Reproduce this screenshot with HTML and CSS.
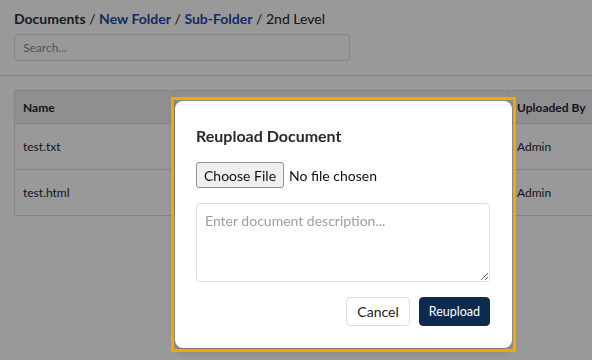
FILE: index.html
```html
<!DOCTYPE html>
<html lang="en">
<head>
    <meta charset="UTF-8">
    <meta name="viewport" content="width=device-width, initial-scale=1.0">
    <title>Documents</title>
    <link rel="stylesheet" href="styles.css">
</head>
<body>
    <div class="page">
        <div class="top">
            <div class="crumbs">
                <span class="root">Documents</span> /
                <a href="#">New Folder</a> /
                <a href="#">Sub-Folder</a> /
                <span>2nd Level</span>
            </div>
            <input class="search" type="text" placeholder="Search...">
        </div>

        <div class="listing">
            <table class="docs">
                <thead>
                    <tr>
                        <th class="colName">Name</th>
                        <th class="colMid"></th>
                        <th class="colBy">Uploaded By</th>
                    </tr>
                </thead>
                <tbody>
                    <tr>
                        <td>test.txt</td>
                        <td></td>
                        <td>Admin</td>
                    </tr>
                    <tr>
                        <td>test.html</td>
                        <td></td>
                        <td>Admin</td>
                    </tr>
                </tbody>
            </table>
        </div>
    </div>

    <div class="mask">
        <div class="dialog">
            <h3 class="dialogTitle">Reupload Document</h3>
            <input class="fileIn" type="file">
            <textarea class="desc" placeholder="Enter document description..."></textarea>
            <div class="actions">
                <button class="btn cancel">Cancel</button>
                <button class="btn primary">Reupload</button>
            </div>
        </div>
    </div>
</body>
</html>
```

FILE: styles.css
```css
*{
    margin: 0;
    padding: 0;
    box-sizing: border-box;
}
html, body{
    width: 592px;
    height: 360px;
    overflow: hidden;
    background: #fff;
}
body{
    font-family: Lato, "Open Sans", sans-serif;
    color: #222;
}

/* page behind the dialog */
.page{
    width: 592px;
    overflow: hidden;
}
.top{
    padding: 9px 14px 14px;
    border-bottom: 1px solid #dcdcdc;
}
.crumbs{
    font-size: 14px;
    line-height: 19px;
    color: #222;
}
.crumbs .root{
    font-weight: bold;
    color: #2a2f3a;
}
.crumbs a{
    color: #2547a8;
    font-weight: bold;
    text-decoration: none;
}
.search{
    display: block;
    width: 336px;
    height: 27px;
    margin-top: 6px;
    padding: 0 8px;
    border: 1px solid #ddd;
    border-radius: 4px;
    font-family: Lato, sans-serif;
    font-size: 12px;
    color: #333;
}
.search::placeholder{
    color: #8a8a8a;
}

.listing{
    padding: 14px 0 0 14px;
}
.docs{
    width: 640px;
    border-collapse: collapse;
    font-size: 12px;
    color: #1e2433;
}
.docs th, .docs td{
    text-align: left;
    padding: 0 8px;
    border: 1px solid #dcdcdc;
    border-right: none;
}
.docs th{
    height: 33px;
    background: #efefef;
    font-weight: bold;
}
.docs td{
    height: 46px;
}
.docs .colName{
    width: 160px;
}
.docs .colMid{
    width: 334px;
}

/* dialog */
.mask{
    position: fixed;
    left: 0;
    top: 0;
    right: 0;
    bottom: 0;
    background: rgba(0, 0, 0, .4);
}
.dialog{
    position: absolute;
    left: 175px;
    top: 101px;
    width: 337px;
    height: 247px;
    padding: 25px 22px 22px 21px;
    background: #fff;
    border-radius: 8px;
    box-shadow: 0 3px 8px rgba(0, 0, 0, .25);
    display: flex;
    flex-direction: column;
}
/* highlight frame, square corners */
.dialog::before{
    content: "";
    position: absolute;
    left: -4px;
    top: -4px;
    right: -4px;
    bottom: -4px;
    border: 3px solid #f7a600;
    pointer-events: none;
}
.dialogTitle{
    font-size: 16px;
    line-height: 20px;
    font-weight: bold;
    color: #2a2a2a;
}
.fileIn{
    margin-top: 16px;
    font-family: Lato, sans-serif;
    font-size: 14px;
    color: #111;
}
.fileIn::file-selector-button{
    font-family: Lato, sans-serif;
    font-size: 14px;
    height: 26px;
    padding: 0 7px;
    margin-right: 5px;
    background: #efefef;
    border: 1px solid #8f8f8f;
    border-radius: 3px;
    color: #111;
}
.desc{
    display: block;
    margin-top: 15px;
    width: 294px;
    height: 79px;
    padding: 8px;
    border: 1px solid #ddd;
    border-radius: 4px;
    font-family: Lato, sans-serif;
    font-size: 14px;
    color: #333;
}
.desc::placeholder{
    color: #9aa0a8;
}
.actions{
    margin-top: 15px;
    display: flex;
    justify-content: flex-end;
    gap: 9px;
}
.btn{
    height: 29px;
    border-radius: 4px;
    font-family: Lato, sans-serif;
    cursor: pointer;
}
.cancel{
    padding: 0 10px;
    background: #fff;
    border: 1px solid #ddd;
    color: #222;
    font-size: 14px;
}
.primary{
    padding: 0 9px;
    background: #0d2a4f;
    border: 1px solid #0d2a4f;
    color: #fff;
    font-size: 12.5px;
}
```
